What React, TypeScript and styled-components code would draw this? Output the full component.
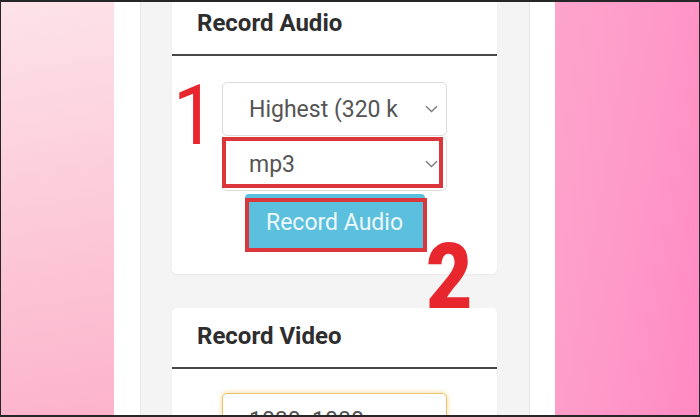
import React from "react";
import styled, { createGlobalStyle } from "styled-components";

const Global = createGlobalStyle`
  html, body { margin: 0; padding: 0; background: #fff; }
  body { font-family: Roboto, "Noto Sans", Arial, sans-serif; }
`;

const Frame = styled.div`
  box-sizing: border-box;
  width: 700px;
  height: 417px;
  display: flex;
  overflow: hidden;
  border-top: 2px solid #262626;
  border-bottom: 2px solid #262626;
  border-left: 1px solid #262626;
  border-right: 1px solid #262626;
`;

const PinkSide = styled.div<{ $side: "left" | "right" }>`
  flex: 0 0 ${(p) => (p.$side === "left" ? "113px" : "144px")};
  background: ${(p) =>
    p.$side === "left"
      ? "linear-gradient(170deg, #fde3e9 0%, #fccbd9 50%, #fcb3cc 100%)"
      : "linear-gradient(100deg, #fda5cc 0%, #fe97c7 60%, #ff89c2 100%)"};
`;

const WhiteStrip = styled.div<{ $w: number }>`
  flex: 0 0 ${(p) => p.$w}px;
  background: #ffffff;
`;

const Main = styled.div`
  flex: 0 0 390px;
  box-sizing: border-box;
  background: #f4f4f4;
  border-left: 1px solid #e6e6e6;
  border-right: 1px solid #e6e6e6;
  padding: 0 32px 0 31px;
  display: flex;
  flex-direction: column;
  gap: 34px;
  overflow: hidden;
`;

const Card = styled.section<{ $first?: boolean }>`
  position: relative;
  background: #fff;
  border-radius: 5px;
  box-shadow: 0 1px 2px rgba(0, 0, 0, 0.05);
  margin-top: ${(p) => (p.$first ? "-7px" : "0")};
  flex-shrink: 0;
`;

const CardHeader = styled.h2`
  margin: 0;
  padding: 15px 25px 18px;
  font-family: Roboto, Arial, sans-serif;
  font-weight: 700;
  font-size: 24px;
  line-height: 26px;
  color: #2e2e2e;
  border-bottom: 2px solid #474747;
`;

const CardBody = styled.div<{ $top: number }>`
  padding: ${(p) => p.$top}px 0 24px;
  display: flex;
  flex-direction: column;
  align-items: center;
`;

const SelectBox = styled.div<{ $focus?: boolean }>`
  position: relative;
  box-sizing: border-box;
  width: 225px;
  height: 54px;
  margin-bottom: 1px;
  display: flex;
  align-items: center;
  justify-content: space-between;
  gap: 6px;
  padding: 0 8px 0 26px;
  background: #fff;
  border: 1px solid ${(p) => (p.$focus ? "#e9c46f" : "#dcdcdc")};
  border-radius: 5px;
  box-shadow: ${(p) => (p.$focus ? "0 0 4px 1px rgba(240, 200, 110, 0.55)" : "none")};
  font-family: Roboto, Arial, sans-serif;
  font-size: 23px;
  color: #555;
  white-space: nowrap;
`;

const SelectText = styled.span`
  overflow: hidden;
  flex: 1 1 auto;
  min-width: 0;
`;

const Chevron = () => (
  <svg width="13" height="8" viewBox="0 0 13 8" fill="none" style={{ flexShrink: 0 }}>
    <path d="M1 1.2 L6.5 6.5 L12 1.2" stroke="#7a7a7a" strokeWidth="1.3" />
  </svg>
);

const Button = styled.button`
  position: relative;
  box-sizing: border-box;
  margin-top: 2px;
  width: 180px;
  height: 56px;
  border: none;
  border-radius: 4px;
  background: #5bc0de;
  color: #eef8fb;
  font-family: Roboto, Arial, sans-serif;
  font-size: 23px;
  padding: 0;
`;

const Mark = styled.span<{ $top: number; $left: number; $right: number; $bottom: number; $w: number }>`
  position: absolute;
  top: ${(p) => p.$top}px;
  left: ${(p) => p.$left}px;
  right: ${(p) => p.$right}px;
  bottom: ${(p) => p.$bottom}px;
  border: ${(p) => p.$w}px solid #dc363d;
  pointer-events: none;
`;

const Digit = styled.span<{ $x: number; $y: number; $bold?: boolean; $size: number; $sx?: number }>`
  position: absolute;
  left: ${(p) => p.$x}px;
  top: ${(p) => p.$y}px;
  font-family: Roboto, Arial, sans-serif;
  font-weight: ${(p) => (p.$bold ? 900 : 400)};
  font-size: ${(p) => p.$size}px;
  line-height: 1;
  color: #e8262e;
  transform: scaleX(${(p) => p.$sx ?? 1});
  transform-origin: left top;
`;

export default function App() {
  return (
    <>
      <Global />
      <Frame>
        <PinkSide $side="left" />
        <WhiteStrip $w={26} />
        <Main>
          <Card $first>
            <CardHeader>Record Audio</CardHeader>
            <CardBody $top={26}>
              <SelectBox>
                <SelectText>Highest (320 k</SelectText>
                <Chevron />
              </SelectBox>
              <SelectBox>
                <SelectText>mp3</SelectText>
                <Chevron />
                <Mark $top={-1} $left={-1} $right={3} $bottom={2} $w={4} />
              </SelectBox>
              <Button>
                Record Audio
                <Mark $top={4} $left={0} $right={-2} $bottom={-2} $w={4} />
              </Button>
            </CardBody>
            <Digit $x={1} $y={79} $size={84} $sx={0.9}>
              1
            </Digit>
            <Digit $x={254} $y={236} $size={93} $sx={0.86} $bold>
              2
            </Digit>
          </Card>
          <Card>
            <CardHeader>Record Video</CardHeader>
            <CardBody $top={24}>
              <SelectBox $focus>
                <SelectText>1080x1080p</SelectText>
                <Chevron />
              </SelectBox>
            </CardBody>
          </Card>
        </Main>
        <WhiteStrip $w={25} />
        <PinkSide $side="right" />
      </Frame>
    </>
  );
}
